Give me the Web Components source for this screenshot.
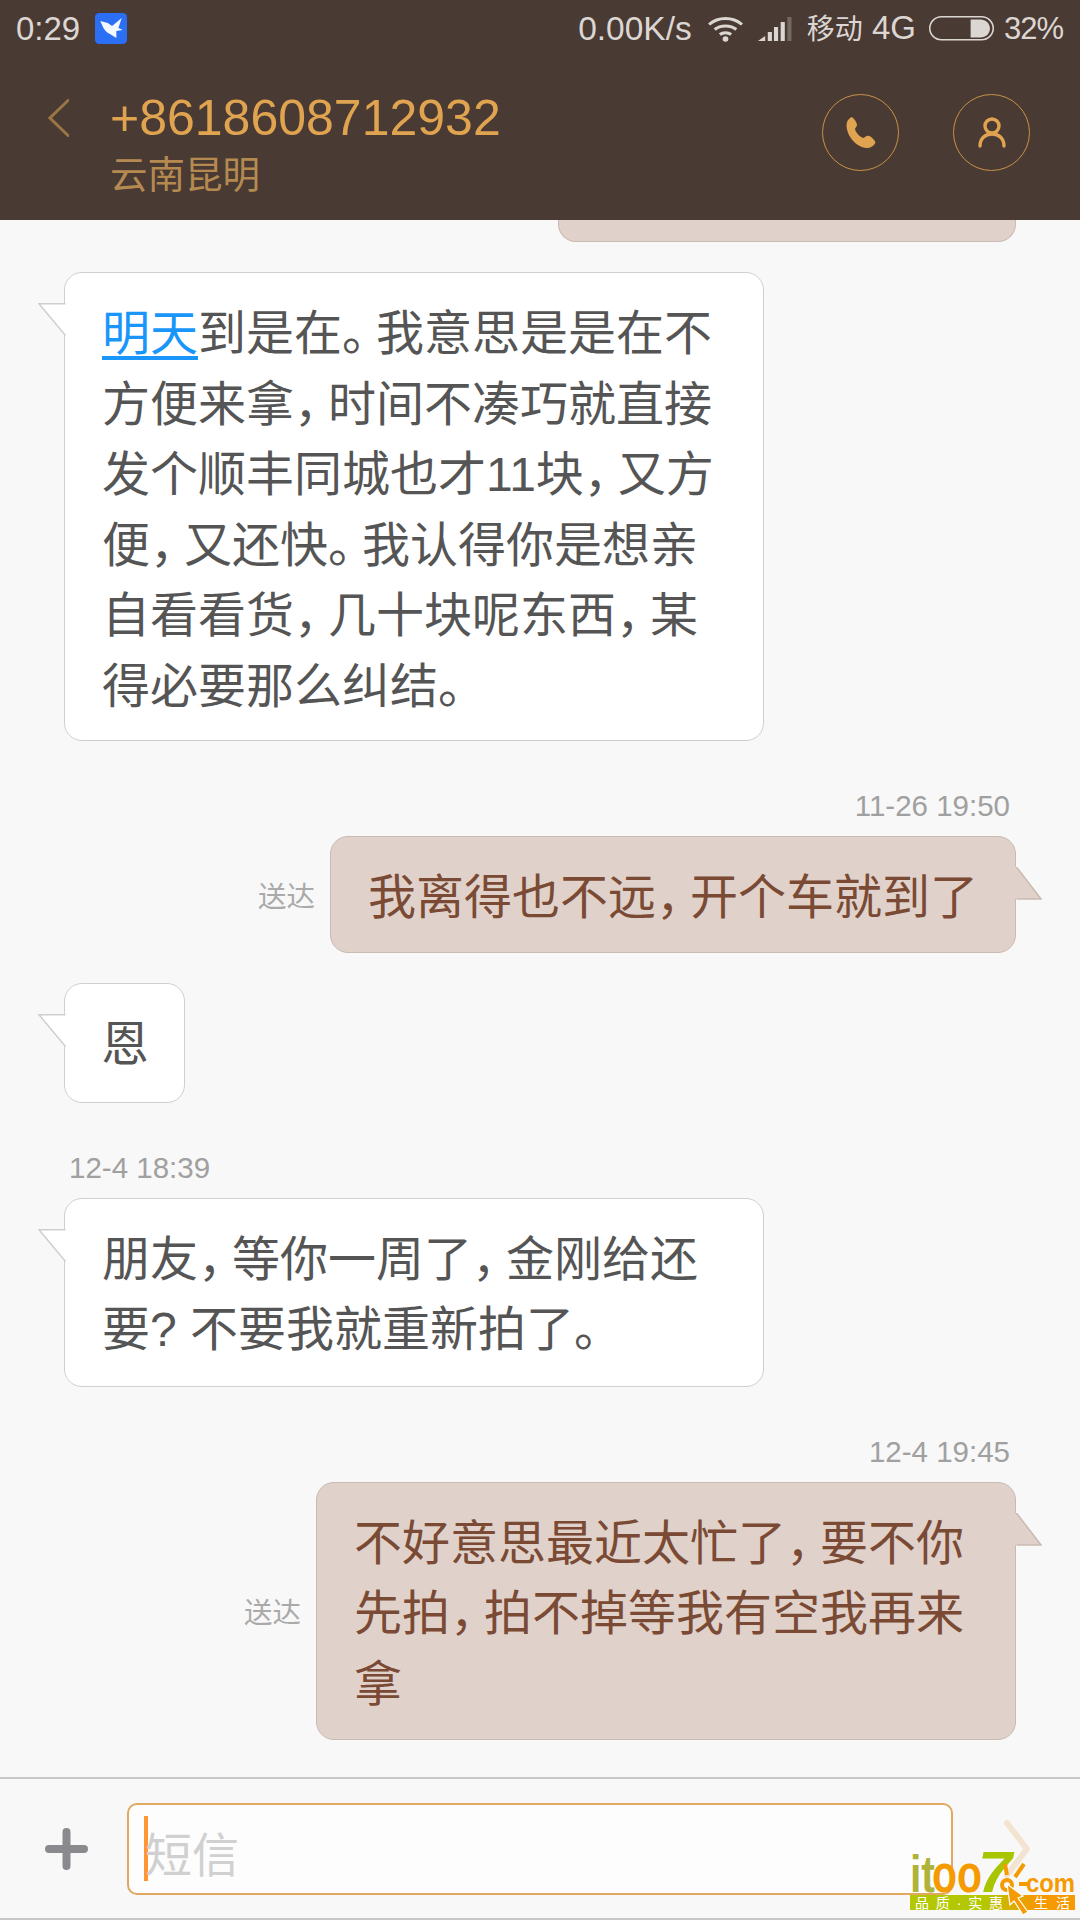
<!DOCTYPE html>
<html lang="zh-CN">
<head>
<meta charset="utf-8">
<title>短信</title>
<style>
  html, body { margin: 0; padding: 0; }
  body {
    width: 1080px;
    height: 1920px;
    overflow: hidden;
    font-family: "Liberation Sans", "Noto Sans CJK SC", sans-serif;
  }
  sms-app { height: 1920px; }
</style>
</head>
<body>
<sms-app>
  <sms-header slot="header" number="+8618608712932" place="云南昆明"></sms-header>
  <sms-clipped></sms-clipped>
  <sms-message side="in" wide><a>明天</a>到是在。我意思是是在不<br>方便来拿，时间不凑巧就直接<br>发个顺丰同城也才11块，又方<br>便，又还快。我认得你是想亲<br>自看看货，几十块呢东西，某<br>得必要那么纠结。</sms-message>
  <sms-message side="out" time="11-26 19:50" status="送达">我离得也不远，开个车就到了</sms-message>
  <sms-message side="in" short style="--extra: 3.5px">恩</sms-message>
  <sms-message side="in" wide time="12-4 18:39" style="--extra: 2px">朋友，等你一周了，金刚给还<br>要? 不要我就重新拍了。</sms-message>
  <sms-message side="out" wide time="12-4 19:45" status="送达" style="--extra: 1px">不好意思最近太忙了，要不你<br>先拍，拍不掉等我有空我再来<br>拿</sms-message>
  <sms-composer slot="footer" placeholder="短信"></sms-composer>
  <sms-watermark slot="footer"></sms-watermark>
</sms-app>

<script>
// page shell: header on top, composer at the bottom, list takes the rest
class SmsApp extends HTMLElement {
  constructor() {
    super();
    this.attachShadow({ mode: 'open' });
    this.shadowRoot.innerHTML = `
      <style>
        :host { display: flex; flex-direction: column; background: #f8f8f8; }
        #list { flex: 1; min-height: 0; overflow: hidden; display: flex; flex-direction: column; }
        #footer { position: relative; }
      </style>
      <slot name="header"></slot>
      <div id="list"><slot></slot></div>
      <div id="footer"><slot name="footer"></slot></div>
    `;
  }
}

class SmsStatusBar extends HTMLElement {
  constructor() {
    super();
    this.attachShadow({ mode: 'open' });
    this.shadowRoot.innerHTML = `
      <style>
        :host {
          display: flex; align-items: center; height: 57px;
          padding: 0 17px 0 16px; color: #dcd6d3;
          font-size: 33px; line-height: 57px;
        }
        svg { display: block; }
        #bird { margin-left: 15px; }
        #speed { margin-left: auto; font-size: 33.5px; }
        #wifi { margin-left: 16px; }
        #signal { margin-left: 15px; }
        #carrier { margin-left: 15px; }
        #carrier span { font-size: 28px; }
        #battery { margin-left: 13px; }
        #level { margin-left: 10px; font-size: 31px; letter-spacing: -1px; }
      </style>
      <span>0:29</span>
      <svg id="bird" width="32" height="31" viewBox="0 0 30 31" preserveAspectRatio="none">
        <rect width="30" height="31" rx="4" fill="#2b6ff5"/>
        <path d="M5 8L12 10L16 13L25 5L22 15L26 17L20 18L20 25L14 21C9 19 7 13 5 8Z" fill="#f4f8ff"/>
      </svg>
      <span id="speed">0.00K/s</span>
      <svg id="wifi" width="35" height="26" viewBox="0 0 34 26" preserveAspectRatio="none" fill="none" stroke="#dcd6d3" stroke-width="3">
        <path d="M1 8.5C10 .5 24 .5 33 8.5"/>
        <path d="M6.5 13.5C12 8.8 22 8.8 27.5 13.5"/>
        <path d="M11.5 18.5C14.5 16 19.5 16 22.5 18.5"/>
        <circle cx="17" cy="23" r="2.8" fill="#dcd6d3" stroke="none"/>
      </svg>
      <svg id="signal" width="34" height="24" viewBox="0 0 33 24" preserveAspectRatio="none" fill="#dcd6d3">
        <path d="M0 24L7 19V24Z"/>
        <rect x="9.5" y="15" width="4" height="9"/>
        <rect x="15.5" y="10" width="4" height="14"/>
        <rect x="22" y="5" width="4" height="19"/>
        <rect x="28.5" y="0" width="4" height="24" opacity=".3"/>
      </svg>
      <span id="carrier"><span>移动</span> 4G</span>
      <svg id="battery" width="65" height="25" viewBox="0 0 64 25" preserveAspectRatio="none" fill="none">
        <rect x=".75" y=".75" width="62.5" height="23" rx="11.5" stroke="#dcd6d3" stroke-width="1.5"/>
        <path d="M41 3.5H50.5C56 3.5 60 7.5 60 12.5S56 21.5 50.5 21.5H41Z" fill="#dcd6d3"/>
      </svg>
      <span id="level">32%</span>
    `;
  }
}

class SmsHeader extends HTMLElement {
  constructor() {
    super();
    this.attachShadow({ mode: 'open' });
    this.shadowRoot.innerHTML = `
      <style>
        :host { display: block; height: 220px; background: #4a3a34; }
        #bar { display: flex; align-items: flex-start; height: 163px; }
        #back { margin: 42px 0 0 48px; }
        #who { margin-left: 41px; flex: 1; padding-top: 33px; }
        #number { font-size: 50px; line-height: 56px; color: #e0a450; }
        #place { font-size: 37.5px; line-height: 50px; margin-top: 4px; color: #b58a50; }
        .round {
          box-sizing: border-box; width: 77px; height: 77px; margin-top: 37px;
          border: 1.5px solid #c79245; border-radius: 50%;
          display: flex; align-items: center; justify-content: center;
        }
        #phone { margin-right: 54px; }
        #contact { margin-right: 50px; }
        svg { display: block; }
      </style>
      <sms-status-bar></sms-status-bar>
      <div id="bar">
        <svg id="back" width="21" height="38" viewBox="0 0 21 38" fill="none" stroke="#9a7645" stroke-width="3" stroke-linecap="round">
          <path d="M20 1.5L2 19L20 36.5"/>
        </svg>
        <div id="who">
          <div id="number"></div>
          <div id="place"></div>
        </div>
        <div class="round" id="phone">
          <svg width="30" height="31" viewBox="0 0 30 31" fill="#e0a450">
            <path d="M5.5 0C8 1 10.5 5 11 7.5C11.3 9.5 9.3 10.5 9 12C9.5 15.5 14 20 17.5 21C19 20.5 20 18.5 22 18.8C25 19.3 28.5 22.5 29.5 25.5C28 29 24.5 31 20.5 31C10 30 0.5 19 0.5 8C0.5 4.5 2.5 1.5 5.5 0Z"/>
          </svg>
        </div>
        <div class="round" id="contact">
          <svg width="28" height="31" viewBox="0 0 28 31" fill="none" stroke="#e0a450" stroke-width="3.4" stroke-linecap="round">
            <circle cx="14" cy="9" r="7"/>
            <path d="M2 29C2 21.5 7 17 14 17S26 21.5 26 29"/>
          </svg>
        </div>
      </div>
    `;
  }

  connectedCallback() {
    this.shadowRoot.querySelector('#number').textContent = this.getAttribute('number');
    this.shadowRoot.querySelector('#place').textContent = this.getAttribute('place');
  }
}

// bottom of the previous message, scrolled under the header
class SmsClipped extends HTMLElement {
  constructor() {
    super();
    this.attachShadow({ mode: 'open' });
    this.shadowRoot.innerHTML = `
      <style>
        :host {
          display: block; box-sizing: border-box; flex: none;
          width: 458px; height: 22px; margin-left: 558px;
          background: #e0d2ca; border: 1.5px solid #c9bab2; border-top: 0;
          border-radius: 0 0 18px 18px;
        }
      </style>
    `;
  }
}

class SmsMessage extends HTMLElement {
  constructor() {
    super();
    this.attachShadow({ mode: 'open' });
    this.shadowRoot.innerHTML = `
      <style>
        :host { display: block; flex: none; padding: 30px 64px 0; }
        :host([time]) { padding-top: 47px; }
        #time {
          display: none; height: 36px; line-height: 36px; margin: 0 6px 12px 5px;
          font-size: 29.5px; color: #a0a0a0;
        }
        :host([time]) #time { display: block; }
        :host([side="out"]) #time { text-align: right; }
        #row { display: flex; align-items: center; gap: 15px; }
        :host([side="out"]) #row { justify-content: flex-end; }
        #status { font-size: 28.5px; color: #aaa; }
        #bubble {
          position: relative; box-sizing: border-box; min-width: 121px;
          padding: 26px 37px calc(18px + var(--extra, 0px)); border: 1.5px solid #cfcfcf; border-radius: 18px;
          background: #fff; color: #555;
          font-size: 48px; line-height: 70.5px;
        }
        :host([wide]) #bubble { width: 700px; }
        :host([short]) #bubble { padding-left: 36px; padding-right: 34px; }
        :host([side="out"]) #bubble { background: #e0d2ca; border-color: #c9bab2; color: #7a4a35; }
        svg { position: absolute; top: 30px; display: block; }
        #tail-in { left: -27.5px; }
        #tail-out { right: -26.5px; }
        :host([side="out"]) #tail-in, :host([side="in"]) #tail-out { display: none; }
        ::slotted(a) { color: #1a96fa; text-decoration: underline; text-underline-offset: 6px; }
        /* the phone's font sets CJK punctuation narrow */
        ::slotted(.p) { letter-spacing: -14px; }
      </style>
      <div id="time"></div>
      <div id="row">
        <span id="status"></span>
        <div id="bubble">
          <svg id="tail-in" width="29" height="34" viewBox="0 0 29 34">
            <path d="M29 .75H1L27.5 32.5H29Z" fill="#fff"/>
            <path d="M27.5 .75H1L27.5 32.5" fill="none" stroke="#cfcfcf" stroke-width="1.5"/>
          </svg>
          <svg id="tail-out" width="27" height="34" viewBox="0 0 27 34">
            <path d="M0 0H1.5L26 32H0Z" fill="#e0d2ca"/>
            <path d="M1.5 0L26 32H1.5" fill="none" stroke="#c9bab2" stroke-width="1.5"/>
          </svg>
          <slot></slot>
        </div>
      </div>
    `;
  }

  connectedCallback() {
    this.shadowRoot.querySelector('#time').textContent = this.getAttribute('time') || '';
    const status = this.shadowRoot.querySelector('#status');
    status.textContent = this.getAttribute('status') || '';
    if (!status.textContent) status.remove();
    this.innerHTML = this.innerHTML.replace(/[，。]/g, '<span class="p">$&</span>');
  }
}

class SmsComposer extends HTMLElement {
  constructor() {
    super();
    this.attachShadow({ mode: 'open' });
    this.shadowRoot.innerHTML = `
      <style>
        :host {
          display: flex; align-items: center; box-sizing: border-box; height: 143px;
          border-top: 2px solid #c8c8c8; border-bottom: 2px solid #c8c8c8;
          background: #f8f8f8;
        }
        svg { display: block; flex: none; }
        #plus { margin-left: 45px; }
        #input {
          box-sizing: border-box; width: 826px; height: 92px; margin-left: 39px;
          display: flex; align-items: center; padding-left: 15px;
          background: #fdfdfd; border: 2px solid #e0a860; border-radius: 10px;
        }
        #caret { flex: none; width: 4px; height: 65px; background: #ff9633; }
        #hint { margin-left: -3px; font-size: 47px; color: #d0d0d0; position: relative; top: 3px; }
        #send { margin-left: 51px; }
      </style>
      <svg id="plus" width="43" height="42" viewBox="0 0 43 42" stroke="#8a8a8e" stroke-width="8" stroke-linecap="round">
        <path d="M21.5 4V38M4 21H39"/>
      </svg>
      <div id="input"><span id="caret"></span><span id="hint"></span></div>
      <svg id="send" width="26" height="58" viewBox="0 0 26 58" fill="none" stroke="#f3e4d2" stroke-width="6" stroke-linecap="round" stroke-linejoin="round">
        <path d="M3 3L23 29L3 55"/>
      </svg>
    `;
  }

  connectedCallback() {
    this.shadowRoot.querySelector('#hint').textContent = this.getAttribute('placeholder');
  }
}

// site watermark stamped over the bottom right corner
class SmsWatermark extends HTMLElement {
  constructor() {
    super();
    this.attachShadow({ mode: 'open' });
    this.shadowRoot.innerHTML = `
      <style>
        :host { display: block; position: absolute; left: 910px; top: 73px; width: 168px; height: 66px; }
        svg { display: block; overflow: visible; font-family: "Liberation Sans", "Noto Sans CJK SC", sans-serif; }
      </style>
      <svg width="168" height="66" viewBox="0 0 168 66">
        <defs>
          <linearGradient id="band" x1="0" x2="1" y1="0" y2="0">
            <stop offset="0" stop-color="#b3c800"/>
            <stop offset=".45" stop-color="#b3c800"/>
            <stop offset=".75" stop-color="#f59a00"/>
            <stop offset="1" stop-color="#f59a00"/>
          </linearGradient>
        </defs>
        <text x="0" y="42" font-size="52" font-weight="700" fill="#aeb33c" textLength="25" lengthAdjust="spacingAndGlyphs">it</text>
        <text x="22" y="42" font-size="54" font-weight="700" fill="#f59a00" textLength="50" lengthAdjust="spacingAndGlyphs">oo</text>
        <text x="68" y="42" font-size="58" font-weight="700" font-style="italic" fill="#a9c400" textLength="34" lengthAdjust="spacingAndGlyphs">7</text>
        <g fill="none" stroke="#f59a00" stroke-width="4">
          <circle cx="97" cy="35" r="5"/>
          <path d="M97 25L95 14M105 27L114 14M109 34L119 34"/>
        </g>
        <text x="116" y="42" font-size="26" font-weight="700" fill="#f59a00" textLength="49" lengthAdjust="spacingAndGlyphs">com</text>
        <rect x="0" y="45" width="165" height="15" fill="url(#band)"/>
        <text x="5" y="58" font-size="14" fill="#fff" textLength="88">品质·实惠</text>
        <text x="124" y="58" font-size="14" fill="#fff" textLength="36">生活</text>
        <path d="M97 34L113 46L108 48L118 62L113 65L104 51L100 55Z" fill="#f59a00" stroke="#fff" stroke-width="1.2"/>
      </svg>
    `;
  }
}

customElements.define('sms-app', SmsApp);
customElements.define('sms-status-bar', SmsStatusBar);
customElements.define('sms-header', SmsHeader);
customElements.define('sms-clipped', SmsClipped);
customElements.define('sms-message', SmsMessage);
customElements.define('sms-composer', SmsComposer);
customElements.define('sms-watermark', SmsWatermark);
</script>
</body>
</html>
